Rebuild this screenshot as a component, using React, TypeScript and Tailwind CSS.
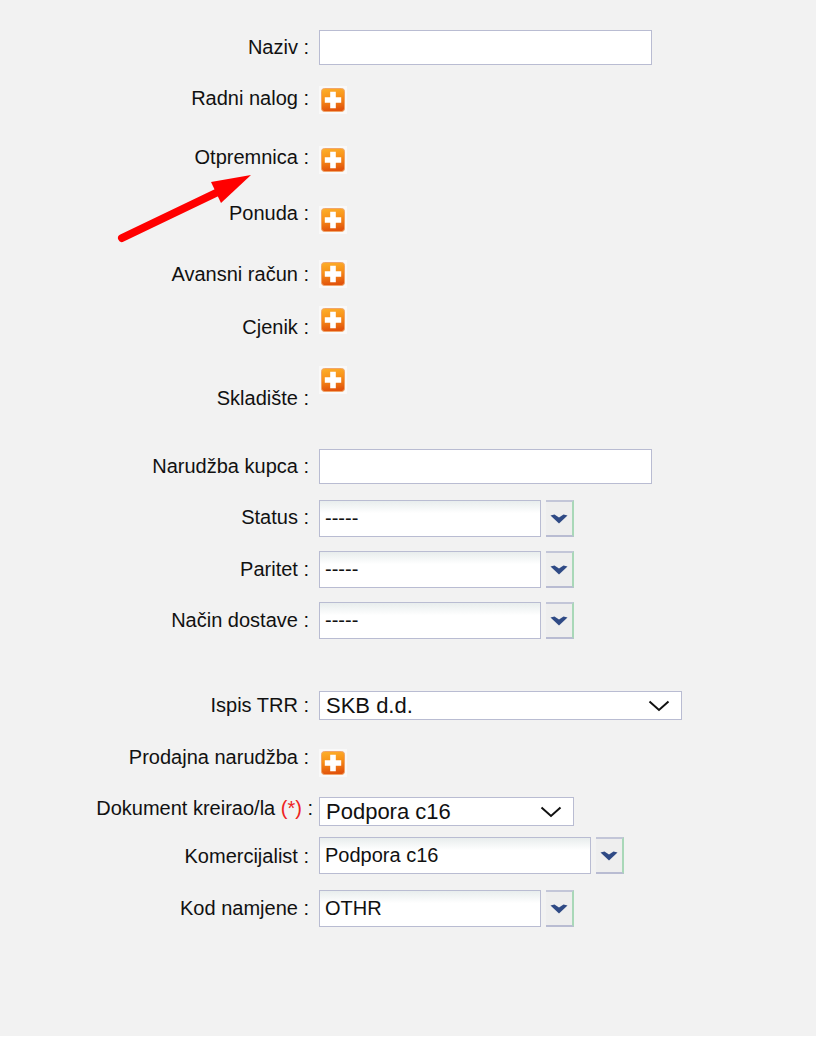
const Plus = ({ cls = "" }: { cls?: string }) => (
  <div className={`w-[28px] h-[28px] bg-[#f9f9f9] flex items-center justify-center ${cls}`}>
    <svg width="26" height="26" viewBox="0 0 26 26">
      <defs>
        <linearGradient id="og" x1="0" y1="0" x2="0.15" y2="1">
          <stop offset="0" stopColor="#fdb02a" />
          <stop offset="0.45" stopColor="#f8931a" />
          <stop offset="1" stopColor="#e2540c" />
        </linearGradient>
        <filter id="sf" x="-10%" y="-10%" width="120%" height="120%">
          <feGaussianBlur stdDeviation="0.5" />
        </filter>
      </defs>
      <rect x="1.5" y="1.5" width="23" height="23" rx="3" fill="url(#og)" stroke="#f0a56b" strokeWidth="1" />
      <path d="M10.2 4.8h5.6v5.4h5.4v5.6h-5.4v5.4h-5.6v-5.4h-5.4v-5.6h5.4z" fill="#fff" filter="url(#sf)" />
    </svg>
  </div>
);

const Chevron = () => (
  <svg width="18" height="10" viewBox="0 0 18 10">
    <path d="M0.5 1.5 L4.5 0.5 L9 3.5 L13.5 0.5 L17.5 1.5 L9 9.5z" fill="#2f4a85" />
  </svg>
);

const Btn = () => (
  <div className="ml-[5px] w-[28px] h-[37px] bg-[#eeeeee] border-t-2 border-b-2 border-r-2 border-t-[#c3c6d8] border-b-[#b9bcd2] border-r-[#a9d8b8] flex items-center justify-center">
    <Chevron />
  </div>
);

const Combo = ({ text, w }: { text: string; w: string }) => (
  <div className="flex">
    <div className={`${w} h-[37px] border border-[#b9bcd2] bg-gradient-to-b from-[#e8eded] to-white to-[35%] pl-[5px] text-[20px] leading-[35px]`}>{text}</div>
    <Btn />
  </div>
);

const Sel = ({ text, w }: { text: string; w: string }) => (
  <div className={`${w} h-[29px] border border-[#b9bcd2] bg-white pl-[6px] pr-[11px] flex items-center justify-between text-[22px]`}>
    <span>{text}</span>
    <svg width="22" height="12" viewBox="0 0 22 12" fill="none">
      <path d="M1.5 1.5 L11 10 L20.5 1.5" stroke="#111" strokeWidth="2" />
    </svg>
  </div>
);

const Input = () => <div className="w-[333px] h-[35px] border border-[#b9bcd2] bg-white" />;

const Row = ({
  h,
  lab,
  ctl,
  label,
  children,
}: {
  h: string;
  lab: string;
  ctl: string;
  label: React.ReactNode;
  children: React.ReactNode;
}) => (
  <div className={`flex items-start ${h}`}>
    <div className={`w-[309px] text-right leading-[20px] whitespace-nowrap ${lab}`}>{label}</div>
    <div className={`ml-[10px] ${ctl}`}>{children}</div>
  </div>
);

export default function App() {
  return (
    <div className="relative h-[1036px] bg-[#f2f2f2] pt-[30px] text-[20px] text-[#111] font-['Liberation_Sans',Arial,sans-serif]">
      <Row h="h-[56px]" lab="mt-[7px]" ctl="" label="Naziv :"><Input /></Row>
      <Row h="h-[60px]" lab="mt-[2px]" ctl="" label="Radni nalog :"><Plus /></Row>
      <Row h="h-[57px]" lab="mt-[1px]" ctl="" label="Otpremnica :"><Plus /></Row>
      <Row h="h-[57px]" lab="" ctl="mt-[3px]" label="Ponuda :"><Plus /></Row>
      <Row h="h-[46px]" lab="mt-[4px]" ctl="" label="Avansni račun :"><Plus /></Row>
      <Row h="h-[60px]" lab="mt-[11px]" ctl="" label="Cjenik :"><Plus /></Row>
      <Row h="h-[83px]" lab="mt-[22px]" ctl="" label="Skladište :"><Plus /></Row>
      <Row h="h-[51px]" lab="mt-[7px]" ctl="" label="Narudžba kupca :"><Input /></Row>
      <Row h="h-[51px]" lab="mt-[7px]" ctl="" label="Status :"><Combo text="-----" w="w-[222px]" /></Row>
      <Row h="h-[51px]" lab="mt-[8px]" ctl="" label="Paritet :"><Combo text="-----" w="w-[222px]" /></Row>
      <Row h="h-[89px]" lab="mt-[8px]" ctl="" label="Način dostave :"><Combo text="-----" w="w-[222px]" /></Row>
      <Row h="h-[56px]" lab="mt-[4px]" ctl="" label="Ispis TRR :"><Sel text="SKB d.d." w="w-[363px]" /></Row>
      <Row h="h-[50px]" lab="" ctl="mt-[2px]" label="Prodajna narudžba :"><Plus /></Row>
      <Row h="h-[40px]" lab="mt-[1px] translate-x-[4px]" ctl="" label={<><span>Dokument kreirao/la </span><span className="text-[#ee2222]">(*)</span><span> :</span></>}><Sel text="Podpora c16" w="w-[255px]" /></Row>
      <Row h="h-[53px]" lab="mt-[9px]" ctl="" label="Komercijalist :"><Combo text="Podpora c16" w="w-[272px]" /></Row>
      <Row h="h-[51px]" lab="mt-[8px]" ctl="" label="Kod namjene :"><Combo text="OTHR" w="w-[222px]" /></Row>
      <svg className="absolute left-[110px] top-[165px]" width="150" height="85" viewBox="0 0 150 85">
        <path d="M12 73 L108 27" stroke="#ff0000" strokeWidth="8" strokeLinecap="round" fill="none" />
        <path d="M141 10 L101 17 L111 38z" fill="#ff0000" />
      </svg>
    </div>
  );
}
